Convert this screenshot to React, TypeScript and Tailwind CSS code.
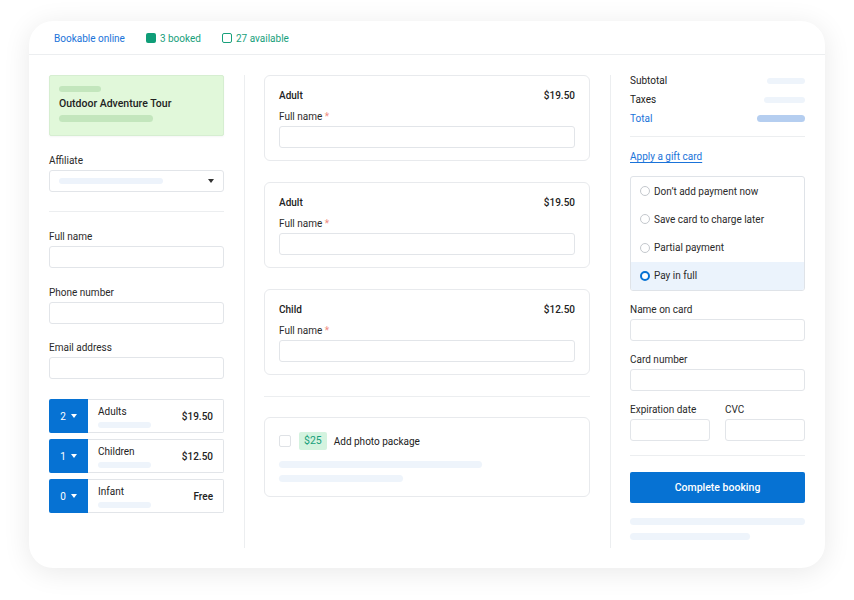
import React from "react";

const font = { fontFamily: "Roboto, 'Liberation Sans', sans-serif" };

// small placeholder bar used for skeleton text
const Bar = ({ className }: { className: string }) => (
  <div className={`rounded-full ${className}`} />
);

const Field = ({ label, className = "" }: { label: React.ReactNode; className?: string }) => (
  <div className={className}>
    <div className="h-[14px] leading-[14px] text-[10px] text-[#2a2a2a]">{label}</div>
    <div className="mt-[2px] h-[22px] rounded-[3px] border border-[#e2e5e9] bg-white" />
  </div>
);

const Caret = () => (
  <svg width="6" height="4" viewBox="0 0 6 4" className="inline-block">
    <path d="M0 0h6L3 4z" fill="currentColor" />
  </svg>
);

const tickets = [
  { qty: 2, name: "Adults", price: "$19.50" },
  { qty: 1, name: "Children", price: "$12.50" },
  { qty: 0, name: "Infant", price: "Free" },
];

const guests = [
  { type: "Adult", price: "$19.50" },
  { type: "Adult", price: "$19.50" },
  { type: "Child", price: "$12.50" },
];

const paymentOptions = ["Don’t add payment now", "Save card to charge later", "Partial payment", "Pay in full"];

export default function App() {
  return (
    <div className="min-h-[600px] w-[854px] bg-white pl-[29px] pt-[21px]" style={font}>
      <div className="flex h-[547px] w-[796px] flex-col rounded-[24px] bg-white shadow-[0_4px_28px_rgba(0,0,0,0.09)]">
        {/* Header */}
        <div className="flex h-[34px] items-center border-b border-[#eceef0] pl-[25px] pt-[1px] text-[10px]">
          <span className="text-[#1a73d9]">Bookable online</span>
          <span className="ml-[21px] flex items-center text-[#17a07b]">
            <span className="mr-[4px] h-[10px] w-[10px] rounded-[2px] bg-[#0f9d78]" />
            3 booked
          </span>
          <span className="ml-[21px] flex items-center text-[#17a07b]">
            <span className="mr-[4px] h-[10px] w-[10px] rounded-[2px] border border-[#17a07b]" />
            27 available
          </span>
        </div>

        {/* Body */}
        <div className="flex flex-1 px-[20px] pb-[20px] pt-[20px]">
          {/* Left column */}
          <div className="w-[175px]">
            <div className="h-[61px] rounded-[2px] border border-[#d6eed1] bg-[#e1f8da] px-[9px] pt-[10px] shadow-[0_1px_2px_rgba(0,0,0,0.04)]">
              <Bar className="h-[6px] w-[42px] bg-[#c3e6bd]" />
              <div className="mt-[5px] h-[14px] text-[10.5px] font-medium leading-[14px] text-[#222]">
                Outdoor Adventure Tour
              </div>
              <Bar className="mt-[4px] h-[7px] w-[94px] bg-[#c3e6bd]" />
            </div>

            <div className="mt-[18px] h-[14px] text-[10px] leading-[14px] text-[#2a2a2a]">Affiliate</div>
            <div className="mt-[2px] flex h-[22px] items-center justify-between rounded-[3px] border border-[#e2e5e9] pl-[9px] pr-[9px] text-[#333]">
              <Bar className="h-[6px] w-[104px] bg-[#edf3fb]" />
              <Caret />
            </div>

            <div className="mt-[19px] h-px bg-[#eceef0]" />

            <Field label="Full name" className="mt-[18px]" />
            <Field label="Phone number" className="mt-[18px]" />
            <Field label="Email address" className="mt-[17px]" />

            <div className="mt-[20px] flex flex-col gap-[6px]">
              {tickets.map((t) => (
                <div key={t.name} className="flex h-[34px]">
                  <div className="flex w-[39px] items-center justify-center gap-[5px] rounded-l-[2px] bg-[#0672d3] text-[10px] text-white">
                    {t.qty}
                    <Caret />
                  </div>
                  <div className="flex flex-1 items-center justify-between rounded-r-[2px] border border-l-0 border-[#e2e5e9] pl-[10px] pr-[10px]">
                    <div>
                      <div className="h-[14px] text-[10px] leading-[14px] text-[#222]">{t.name}</div>
                      <Bar className="mt-[3px] h-[6px] w-[53px] bg-[#eef4fb]" />
                    </div>
                    <div className="text-[10px] font-medium text-[#222]">{t.price}</div>
                  </div>
                </div>
              ))}
            </div>
          </div>

          <div className="ml-[20px] mr-[19px] w-px bg-[#eceef0]" />

          {/* Middle column */}
          <div className="w-[326px]">
            <div className="flex flex-col gap-[21px]">
              {guests.map((g, i) => (
                <div key={i} className="rounded-[6px] border border-[#e8eaed] px-[14px] pb-[12px] pt-[13px]">
                  <div className="flex h-[14px] items-center justify-between text-[10px] font-medium leading-[14px] text-[#222]">
                    <span>{g.type}</span>
                    <span>{g.price}</span>
                  </div>
                  <Field
                    className="mt-[7px]"
                    label={
                      <>
                        Full name <span className="text-[#f08a7e]">*</span>
                      </>
                    }
                  />
                </div>
              ))}
            </div>

            <div className="mt-[21px] h-px bg-[#eceef0]" />

            <div className="mt-[20px] h-[80px] rounded-[6px] border border-[#e8eaed] px-[14px] pt-[14px]">
              <div className="flex h-[18px] items-center">
                <span className="h-[12px] w-[12px] rounded-[2px] border border-[#dfe2e6]" />
                <span className="ml-[8px] flex h-[18px] items-center rounded-[2px] bg-[#d4f3df] px-[5px] text-[10.5px] text-[#17a07b]">
                  $25
                </span>
                <span className="ml-[7px] text-[10px] text-[#222]">Add photo package</span>
              </div>
              <Bar className="mt-[11px] h-[7px] w-[203px] bg-[#eef4fb]" />
              <Bar className="mt-[7px] h-[7px] w-[124px] bg-[#eef4fb]" />
            </div>
          </div>

          <div className="ml-[20px] mr-[19px] w-px bg-[#eceef0]" />

          {/* Right column */}
          <div className="w-[175px]">
            <div className="-mt-[4px] text-[10px] leading-[19px]">
              <div className="flex items-center justify-between text-[#222]">
                Subtotal
                <Bar className="h-[6px] w-[38px] bg-[#eef4fb]" />
              </div>
              <div className="flex items-center justify-between text-[#222]">
                Taxes
                <Bar className="h-[6px] w-[41px] bg-[#eef4fb]" />
              </div>
              <div className="flex items-center justify-between text-[#1a73d9]">
                Total
                <Bar className="h-[7px] w-[48px] bg-[#b5cef0]" />
              </div>
            </div>

            <div className="mt-[8px] h-px bg-[#eceef0]" />

            <div className="mt-[13px] h-[14px] text-[10px] leading-[14px] text-[#1a73d9] underline underline-offset-2">
              Apply a gift card
            </div>

            <div className="mt-[12px] overflow-hidden rounded-[3px] border border-[#dfe3e8]">
              {paymentOptions.map((opt, i) => {
                const active = i === paymentOptions.length - 1;
                return (
                  <div
                    key={opt}
                    className={`flex h-[28.25px] items-center pl-[9px] text-[10px] text-[#2a2a2a] ${active ? "bg-[#ebf3fc]" : ""}`}
                  >
                    <span
                      className={`h-[10px] w-[10px] rounded-full bg-white ${active ? "border-[2.5px] border-[#0672d3]" : "border border-[#c4c8cd]"}`}
                    />
                    <span className="ml-[4px]">{opt}</span>
                  </div>
                );
              })}
            </div>

            <Field label="Name on card" className="mt-[12px]" />
            <Field label="Card number" className="mt-[12px]" />
            <div className="mt-[12px] flex justify-between">
              <Field label="Expiration date" className="w-[80px]" />
              <Field label="CVC" className="w-[80px]" />
            </div>

            <div className="mt-[14px] h-px bg-[#eceef0]" />

            <button className="mt-[16px] h-[31px] w-full rounded-[2px] bg-[#0672d3] text-[10.5px] font-medium text-white">
              Complete booking
            </button>

            <Bar className="mt-[15px] h-[7px] w-full bg-[#eef4fb]" />
            <Bar className="mt-[8px] h-[7px] w-[120px] bg-[#eef4fb]" />
          </div>
        </div>
      </div>
    </div>
  );
}
